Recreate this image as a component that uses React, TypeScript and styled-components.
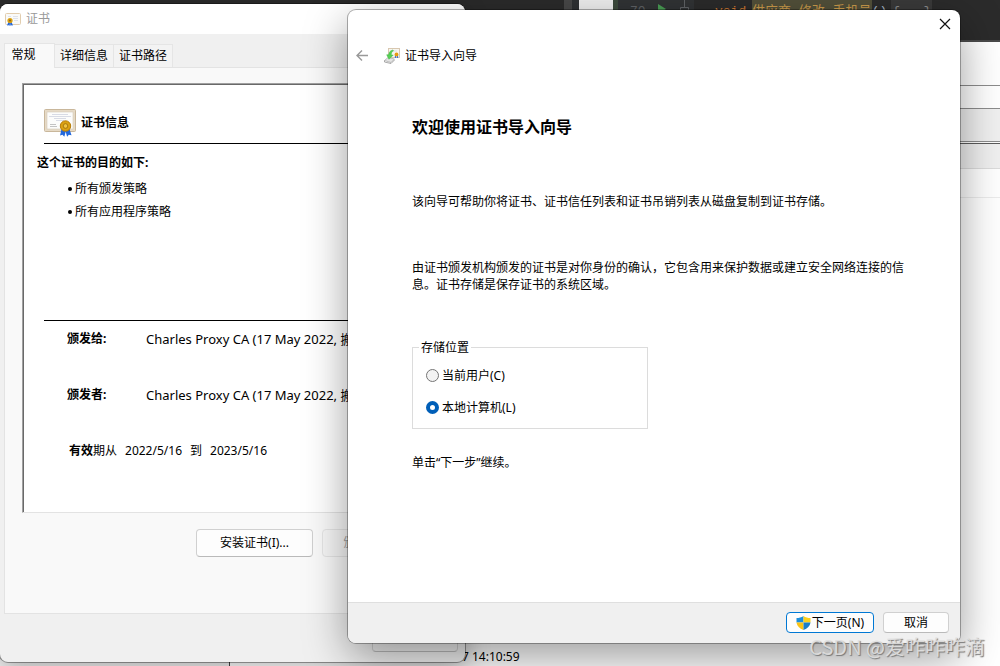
import React, { useState } from "react";
import styled, { createGlobalStyle } from "styled-components";

const GlobalStyle = createGlobalStyle`
  *, *::before, *::after { box-sizing: border-box; }
  body {
    margin: 0;
    font: 12px/16px "Noto Sans", "Noto Sans CJK SC", sans-serif;
    color: #000;
  }
  p, h1, h2, ul, dl, dd, fieldset { margin: 0; padding: 0; }
  button { font: inherit; color: inherit; }
`;

const Desktop = styled.main`
  position: relative;
  display: flex;
  flex-direction: column;
  min-height: 100vh;
  overflow: hidden;
  background: #fff;
`;

/* ---------- windows behind the dialogs ---------- */

const Editor = styled.div`
  display: flex;
  height: 42px;
  padding-left: 564px;
  background: #2b2b2b;
  border-bottom: 2px solid #4a4a4a;
`;

const EditorScroll = styled.div`
  width: 15px;
  background: #2f3133;
  border-left: 8px solid #484848;
`;

const EditorTab = styled.div`
  width: 34px;
  background: #f0f0f0;
`;

const Gutter = styled.div`
  display: flex;
  gap: 12px;
  width: 81px;
  padding-left: 12px;
  border-left: 5px solid #3c4a3c;
  background: #313335;
  color: #606366;
  font: 13px/24px "Liberation Mono", monospace;
`;

const CodeLine = styled.code`
  display: flex;
  height: 24px;
  padding-left: 21px;
  color: #a9b7c6;
  font: 13px/24px "Liberation Mono", "Noto Sans CJK SC", monospace;
  white-space: pre;
`;

const Keyword = styled.span`
  width: 37px;
  color: #cc7832;
`;

const MethodName = styled.span`
  background: #52503a;
  color: #c99a4b;
`;

const Folded = styled.span`
  margin-left: 4px;
  padding: 0 1px;
  background: #3a3a3a;
  color: #8c8c8c;
`;

const Strip = styled.div<{ $h: number; $bg?: string; $line: string }>`
  height: ${(p) => p.$h}px;
  background: ${(p) => p.$bg ?? "#fff"};
  border-bottom: 1px solid ${(p) => p.$line};
`;

const StatusRow = styled.div`
  display: flex;
  gap: 232px;
  margin-top: auto;
  line-height: 16px;
  padding-bottom: 1px;
`;

const StatusTree = styled.div`
  width: 230px;
  margin-bottom: -1px;
  background: #f0f0f0;
  border-right: 1px solid #444;
`;

/* ---------- certificate window ---------- */

const CertWindow = styled.section`
  position: absolute;
  left: 0;
  top: 4px;
  display: flex;
  flex-direction: column;
  width: 465px;
  height: 658px;
  overflow: hidden;
  background: #f0f0f0;
  border-radius: 8px;
  box-shadow: 0 0 0 1px rgba(0, 0, 0, 0.35), 0 8px 24px rgba(0, 0, 0, 0.28);
`;

const CertTitle = styled.header`
  display: flex;
  align-items: center;
  gap: 5px;
  height: 30px;
  padding-left: 5px;
  background: #fff;
  color: #999;
`;

const Tabs = styled.div`
  display: flex;
  align-items: flex-end;
  padding: 9px 4px 0;
`;

const Tab = styled.button<{ $active: boolean }>`
  height: ${(p) => (p.$active ? 25 : 23)}px;
  width: ${(p) => (p.$active ? 51 : 59)}px;
  margin-bottom: ${(p) => (p.$active ? -1 : 0)}px;
  padding: 0;
  padding-right: ${(p) => (p.$active ? 12 : 0)}px;
  padding-bottom: ${(p) => (p.$active ? 2 : 0)}px;
  position: relative;
  z-index: ${(p) => (p.$active ? 1 : 0)};
  border: 1px solid #e5e5e5;
  border-bottom: 0;
  border-left-width: ${(p) => (p.$active ? 1 : 0)}px;
  background: ${(p) => (p.$active ? "#f9f9f9" : "#f3f3f3")};
`;

const TabPanel = styled.div`
  display: flex;
  flex-direction: column;
  flex: 1;
  margin: 0 5px 48px 4px;
  padding: 15px 17px;
  background: #f9f9f9;
  border: 1px solid #e3e3e3;
`;

const Sheet = styled.div`
  display: flex;
  flex-direction: column;
  height: 430px;
  padding: 22px 13px 0 14px;
  background: #fff;
  border: 1px solid;
  border-color: #a0a0a0 #e3e3e3 #e3e3e3 #a0a0a0;
  box-shadow: inset 1px 1px #696969;
`;

const SheetHead = styled.div`
  display: flex;
  align-items: center;
  gap: 5px;
  height: 38px;
  margin-left: 7px;
  padding-bottom: 3px;
  border-bottom: 1px solid #000;
  font-weight: 700;
`;

const Purpose = styled.div`
  height: 176px;
  padding-top: 11px;
  font-weight: 700;
`;

const PurposeList = styled.ul`
  margin-top: 6px;
  padding-left: 31px;
  list-style: none;
  font-weight: 400;
  line-height: 23px;
  li {
    display: flex;
    align-items: center;
    gap: 3px;
  }
  li::before {
    content: "";
    width: 4px;
    height: 4px;
    border-radius: 50%;
    background: #000;
  }
`;

const Facts = styled.dl`
  margin-left: 7px;
  padding: 10px 0 0 23px;
  border-top: 1px solid #000;
`;

const Fact = styled.div`
  display: grid;
  grid-template-columns: 79px 1fr;
  height: 56px;
  white-space: nowrap;
  overflow: hidden;
  dt { font-weight: 700; }
  dd { font-size: 13px; }
`;

const Validity = styled.p`
  display: flex;
  gap: 8px;
  padding-left: 2px;
`;

const SheetActions = styled.div`
  display: flex;
  gap: 9px;
  margin: 16px 0 0 174px;
`;

const Button = styled.button<{ $w: number; $h: number; $primary?: boolean }>`
  display: flex;
  align-items: center;
  justify-content: center;
  flex: none;
  gap: 1px;
  width: ${(p) => p.$w}px;
  height: ${(p) => p.$h}px;
  padding: 0;
  border: 1px solid ${(p) => (p.$primary ? "#0078d4" : "#d0d0d0")};
  border-bottom-color: ${(p) => (p.$primary ? "#0078d4" : "#bababa")};
  border-radius: 4px;
  background: #fdfdfd;
  white-space: nowrap;
  &:disabled {
    color: #9d9d9d;
    border-color: #e5e5e5;
    background: #f7f7f7;
  }
`;

const CertFooter = styled.footer`
  position: absolute;
  right: 7px;
  bottom: 10px;
  button { background: #f0f0f0; }
`;

/* ---------- import wizard ---------- */

const Wizard = styled.section`
  position: absolute;
  left: 348px;
  top: 10px;
  display: flex;
  flex-direction: column;
  width: 612px;
  height: 633px;
  overflow: hidden;
  background: #fff;
  border-radius: 8px;
  box-shadow: 0 0 0 1px rgba(0, 0, 0, 0.3), 0 14px 44px rgba(0, 0, 0, 0.4);
`;

const WizardBar = styled.div`
  display: flex;
  justify-content: flex-end;
  height: 31px;
  padding-right: 8px;
`;

const IconButton = styled.button`
  display: grid;
  place-items: center;
  height: 28px;
  padding: 0;
  border: 0;
  background: none;
`;

const WizardHead = styled.header`
  display: flex;
  align-items: center;
  height: 30px;
  padding-left: 7px;
  h1 {
    margin-left: 5px;
    font-size: 12px;
    font-weight: 400;
  }
  button { margin-right: 14px; }
`;

const WizardBody = styled.div`
  flex: 1;
  padding: 44px 56px 0 64px;
  line-height: 17px;
  h2 {
    font-size: 16px;
    line-height: 24px;
  }
`;

const Text = styled.p<{ $gap: number }>`
  margin-top: ${(p) => p.$gap}px;
`;

const Location = styled.fieldset`
  display: flex;
  flex-direction: column;
  gap: 16px;
  width: 236px;
  height: 90px;
  margin-top: 46px;
  padding: 11px 13px 0;
  border: 1px solid #dcdcdc;
  legend {
    margin-left: -7px;
    padding: 0 2px;
  }
`;

const Option = styled.label`
  display: flex;
  align-items: center;
  gap: 3px;
  height: 16px;
`;

const Radio = styled.input`
  appearance: none;
  width: 13px;
  height: 13px;
  margin: 0;
  border: 1px solid #757575;
  border-radius: 50%;
  background: #f3f3f3;
  &:checked {
    border: 4px solid #005fb8;
    background: #fff;
  }
`;

const WizardFooter = styled.footer`
  display: flex;
  justify-content: flex-end;
  gap: 9px;
  height: 41px;
  padding: 9px 11px 0;
  background: #f0f0f0;
  border-top: 1px solid #dfdfdf;
`;

const Watermark = styled.div`
  position: absolute;
  right: 15px;
  bottom: 5px;
  color: rgba(225, 225, 225, 0.9);
  font-family: "Noto Sans CJK SC", sans-serif;
  font-size: 20px;
  line-height: 28px;
  text-shadow: 1px 1px 1px #777;
`;

/* ---------- drawings ---------- */

const CertificateIcon = ({ width }: { width: number }) => (
  <svg width={width} height={(width * 28) / 32} viewBox="0 0 32 28" aria-hidden="true">
    <rect x=".5" y=".5" width="31" height="22" rx="1" fill="#e6dac6" stroke="#c9b79b" />
    <rect x="3" y="3" width="26" height="17" fill="#fcfcfb" stroke="#d3c8b8" strokeWidth=".6" />
    <path d="M8 5.500h16M5 7.500h22M10 9.500h12M12 11.500h8" stroke="#c9cddb" strokeWidth=".7" />
    <path d="M6 15.500h6M6 17.500h7" stroke="#aaa" strokeWidth=".7" />
    <path d="M17.500 20l-1.500 6.500 2.500-.8 1.800 2 1.400-5 1.400 5 1.700-2 2.700.6-2-6.300z" fill="#2368dc" />
    <circle cx="21.500" cy="17" r="5.200" fill="#dba112" stroke="#b87c05" />
    <circle cx="21.500" cy="17" r="2.300" fill="#efc443" stroke="#99690b" strokeWidth=".8" />
  </svg>
);

const SmallCertificateIcon = () => (
  <svg width="16" height="13" viewBox="0 0 16 13" aria-hidden="true">
    <rect x=".5" y=".5" width="15" height="11" rx="1" fill="#fafaf8" stroke="#e2cdae" />
    <path d="M3 3.500h3M8 3.500h5M8 5.500h5M9 7.500h4" stroke="#dfe2ea" />
    <path d="M3.500 9L2 12.500l1.800-.3.700.8.500-3 .6 3 .9-.8 1.500.3L6.500 9z" fill="#2368dc" />
    <circle cx="5" cy="7.500" r="2.600" fill="#dba112" />
    <circle cx="5" cy="7.500" r="1" fill="#8f6410" />
  </svg>
);

const ImportIcon = () => (
  <svg width="16" height="16" viewBox="0 0 16 16" aria-hidden="true">
    <rect x="4.500" y=".5" width="11" height="9" fill="#f8f5ef" stroke="#d8c7b0" />
    <path d="M9 3h4" stroke="#dcdfe6" />
    <path d="M11.500 7v3M13.500 7v3" stroke="#3670d8" strokeWidth="1.200" />
    <circle cx="12.500" cy="6.500" r="1.900" fill="#e49b13" />
    <path d="M.5 12.500l3.500-3 6.500 1.500-3.500 3.500z" fill="#e4e4e4" stroke="#a8a8a8" strokeWidth=".7" />
    <path d="M.5 12.500v1.500l6.500 1.500 3.500-3.500" fill="none" stroke="#949494" strokeWidth=".8" />
    <path d="M8.800 2C6 2.600 5 4.300 4.800 6.800H2.700L5 11.300l4.200-4.200H7.200C7.300 5 7.700 3.600 9.500 2.700z" fill="#55d152" stroke="#3cb344" strokeWidth=".5" />
  </svg>
);

const ShieldIcon = () => (
  <svg width="15" height="14" viewBox="0 0 15 14" aria-hidden="true">
    <path d="M7.500 0C5.500 1.500 3 2 .5 2v4.500h7z" fill="#1d8fdc" />
    <path d="M7.500 0c2 1.500 4.500 2 7 2v4.500h-7z" fill="#fbd01c" />
    <path d="M.5 6.500c.5 3.500 3 6 7 7.500V6.500z" fill="#fbc314" />
    <path d="M14.500 6.500c-.5 3.500-3 6-7 7.500V6.500z" fill="#1b7fc9" />
  </svg>
);

const ISSUER = "Charles Proxy CA (17 May 2022, 搬砖)";

export default function App() {
  const [tab, setTab] = useState(0);
  const [place, setPlace] = useState("machine");

  return (
    <Desktop>
      <GlobalStyle />
      <Editor>
        <EditorScroll />
        <EditorTab />
        <Gutter>
          70
          <svg width="42" height="20" aria-hidden="true">
            <path d="M0 4l8 5-8 5z" fill="#499c54" />
            <path d="M26.500 0v7M22.500 7.500h8v8h-8z" fill="none" stroke="#606366" />
          </svg>
        </Gutter>
        <CodeLine>
          <Keyword>void</Keyword>
          <MethodName>供应商_修改_手机号</MethodName>()
          <Folded>{"{...}"}</Folded>
        </CodeLine>
      </Editor>
      <Strip $h={44} $line="#8c8c8c" />
      <Strip $h={23} $line="#8c8c8c" />
      <Strip $h={33} $bg="#f0f0f0" $line="#8c8c8c" />
      <Strip $h={2} $line="#5c5c5c" />
      <Strip $h={25} $bg="#f0f0f0" $line="#dcdcdc" />
      <Strip $h={29} $line="#ececec" />
      <StatusRow>
        <StatusTree />
        <span>7 14:10:59</span>
      </StatusRow>

      <CertWindow>
        <CertTitle>
          <SmallCertificateIcon />
          证书
        </CertTitle>
        <Tabs role="tablist">
          {["常规", "详细信息", "证书路径"].map((name, i) => (
            <Tab key={name} role="tab" aria-selected={tab === i} $active={tab === i} onClick={() => setTab(i)}>
              {name}
            </Tab>
          ))}
        </Tabs>
        <TabPanel role="tabpanel">
          <Sheet>
            <SheetHead>
              <CertificateIcon width={32} />
              证书信息
            </SheetHead>
            <Purpose>
              这个证书的目的如下:
              <PurposeList>
                <li>所有颁发策略</li>
                <li>所有应用程序策略</li>
              </PurposeList>
            </Purpose>
            <Facts>
              <Fact>
                <dt>颁发给:</dt>
                <dd>{ISSUER}</dd>
              </Fact>
              <Fact>
                <dt>颁发者:</dt>
                <dd>{ISSUER}</dd>
              </Fact>
              <Validity>
                <span><b>有效</b>期从</span>
                <span>2022/5/16</span>
                <span>到</span>
                <span>2023/5/16</span>
              </Validity>
            </Facts>
          </Sheet>
          <SheetActions>
            <Button $w={117} $h={28}>安装证书(I)...</Button>
            <Button $w={117} $h={28} disabled>颁发者说明(S)</Button>
          </SheetActions>
        </TabPanel>
        <CertFooter>
          <Button $w={86} $h={36}>确定</Button>
        </CertFooter>
      </CertWindow>

      <Wizard>
        <WizardBar>
          <IconButton aria-label="关闭">
            <svg width="14" height="14" viewBox="0 0 14 14">
              <path d="M2 2l10 10M12 2L2 12" stroke="#111" strokeWidth="1.200" />
            </svg>
          </IconButton>
        </WizardBar>
        <WizardHead>
          <IconButton aria-label="返回">
            <svg width="15" height="14" viewBox="0 0 15 14">
              <path d="M13 6.500H2M7 1.500L2 6.500l5 5" fill="none" stroke="#999" strokeWidth="1.400" />
            </svg>
          </IconButton>
          <ImportIcon />
          <h1>证书导入向导</h1>
        </WizardHead>
        <WizardBody>
          <h2>欢迎使用证书导入向导</h2>
          <Text $gap={54}>该向导可帮助你将证书、证书信任列表和证书吊销列表从磁盘复制到证书存储。</Text>
          <Text $gap={49}>
            由证书颁发机构颁发的证书是对你身份的确认，它包含用来保护数据或建立安全网络连接的信息。证书存储是保存证书的系统区域。
          </Text>
          <Location>
            <legend>存储位置</legend>
            <Option>
              <Radio type="radio" name="place" checked={place === "user"} onChange={() => setPlace("user")} />
              当前用户(C)
            </Option>
            <Option>
              <Radio type="radio" name="place" checked={place === "machine"} onChange={() => setPlace("machine")} />
              本地计算机(L)
            </Option>
          </Location>
          <Text $gap={25}>单击“下一步”继续。</Text>
        </WizardBody>
        <WizardFooter>
          <Button $w={88} $h={21} $primary>
            <ShieldIcon />
            下一页(N)
          </Button>
          <Button $w={66} $h={21}>取消</Button>
        </WizardFooter>
      </Wizard>

      <Watermark>CSDN @爱咋咋咋滴</Watermark>
    </Desktop>
  );
}
